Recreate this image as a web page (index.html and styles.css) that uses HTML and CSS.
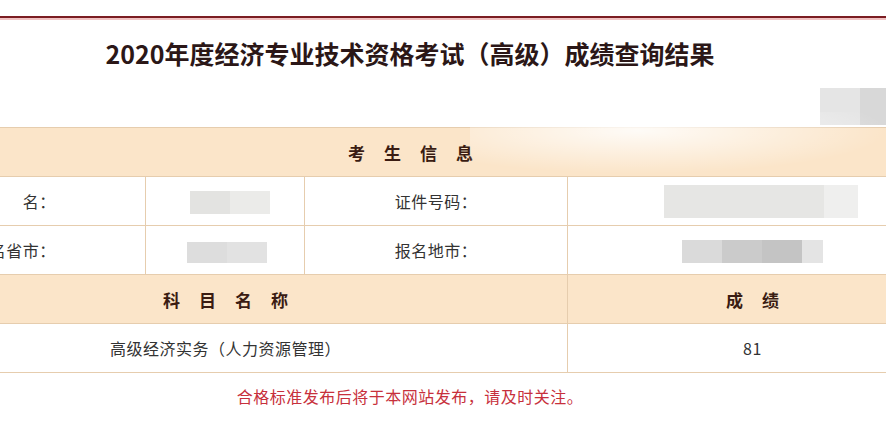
FILE: index.html
```html
<!DOCTYPE html>
<html lang="zh-CN">
<head>
<meta charset="utf-8">
<title>成绩查询结果</title>
<link rel="stylesheet" href="styles.css">
</head>
<body>
<div class="page">
  <div class="topline"></div>
  <div class="sheet">
    <h1 class="title">2020年度经济专业技术资格考试（高级）成绩查询结果</h1>
    <table class="grid">
      <colgroup>
        <col class="c1"><col class="c2"><col class="c3"><col class="c4">
      </colgroup>
      <tr class="head">
        <th colspan="4"><span class="sp">考生信息</span></th>
      </tr>
      <tr>
        <td>姓　　名：</td>
        <td><span class="mask m-name"><i></i><i></i></span></td>
        <td>证件号码：</td>
        <td><span class="mask m-id"><i></i><i></i><i></i><i></i><i></i></span></td>
      </tr>
      <tr>
        <td>报名省市：</td>
        <td><span class="mask m-prov"><i></i><i></i></span></td>
        <td>报名地市：</td>
        <td><span class="mask m-city"><i></i><i></i><i></i><i></i></span></td>
      </tr>
      <tr class="head">
        <th colspan="3"><span class="sp">科目名称</span></th>
        <th><span class="sp">成绩</span></th>
      </tr>
      <tr>
        <td colspan="3">高级经济实务（人力资源管理）</td>
        <td>81</td>
      </tr>
    </table>
    <p class="note">合格标准发布后将于本网站发布，请及时关注。</p>
  </div>
  <div class="corner-mask"><i></i><i></i></div>
  <div class="smudge"></div>
</div>
</body>
</html>
```
FILE: styles.css
```css
html, body {
  margin: 0;
  padding: 0;
  background: #ffffff;
}
body {
  width: 886px;
  height: 433px;
  overflow: hidden;
  font-family: "Noto Sans CJK SC", "Noto Sans", sans-serif;
  color: #333333;
}
.page {
  position: relative;
  width: 886px;
  height: 433px;
  overflow: hidden;
  padding-top: 16px;
  box-sizing: border-box;
}
.topline {
  height: 2px;
  background: #7b1d22;
  border-bottom: 2px solid #f1c3c3;
}
.sheet {
  width: 1054px;
  margin-left: -117px;
}
.title {
  margin: 18px 0 0;
  font-size: 25px;
  line-height: 30px;
  font-weight: 700;
  text-align: center;
  color: #2b1717;
}
.grid {
  margin-top: 59px;
  width: 1054px;
  border-collapse: collapse;
  table-layout: fixed;
}
.c1 { width: 262px; }
.c2 { width: 159px; }
.c3 { width: 263px; }
.c4 { width: 370px; }
.grid td, .grid th {
  height: 48px;
  padding: 0;
  border: 1px solid #e6cdae;
  text-align: center;
  vertical-align: middle;
  font-size: 16px;
  font-weight: 400;
  color: #333333;
  letter-spacing: 0.5px;
}
.grid tr.head th {
  background: #fbe5c9;
  font-size: 17px;
  font-weight: 700;
  color: #3a1c12;
  letter-spacing: 0;
}
.sp {
  letter-spacing: 19px;
  margin-right: -19px;
}
.mask {
  display: inline-flex;
  vertical-align: middle;
}
.mask i {
  display: block;
  height: 100%;
}
.m-name { width: 80px; height: 23px; margin-left: 9px; }
.m-name i { width: 40px; background: #e3e3e1; }
.m-name i + i { background: #ebebe9; }
.m-prov { width: 80px; height: 21px; margin-left: 3px; }
.m-prov i { width: 40px; background: #dddddd; }
.m-prov i + i { background: #e2e2e2; }
.m-id { width: 194px; height: 33px; margin-left: 16px; }
.m-id i { width: 40px; background: #e6e6e4; }
.m-id i:nth-child(5) { width: 34px; background: #efefee; }
.m-city { width: 141px; height: 23px; margin-left: -1px; }
.m-city i { width: 40px; background: #dadada; }
.m-city i:nth-child(2) { background: #cbcbcb; }
.m-city i:nth-child(3) { background: #c4c4c4; }
.m-city i:nth-child(4) { width: 21px; background: #e4e4e4; }
.note {
  margin: 13px 0 0;
  font-size: 16px;
  line-height: 20px;
  text-align: center;
  color: #c7303c;
  letter-spacing: 0.5px;
}
.corner-mask {
  position: absolute;
  left: 820px;
  top: 88px;
  width: 66px;
  height: 37px;
  display: flex;
}
.corner-mask i {
  display: block;
  width: 40px;
  height: 100%;
  background: #e5e5e5;
}
.corner-mask i + i {
  width: 26px;
  background: #d8d8d8;
}
.smudge {
  position: absolute;
  left: 470px;
  top: 112px;
  width: 420px;
  height: 62px;
  background: radial-gradient(ellipse at 40% 30%, rgba(255,255,255,0.85), rgba(255,255,255,0) 70%);
  pointer-events: none;
}
```
